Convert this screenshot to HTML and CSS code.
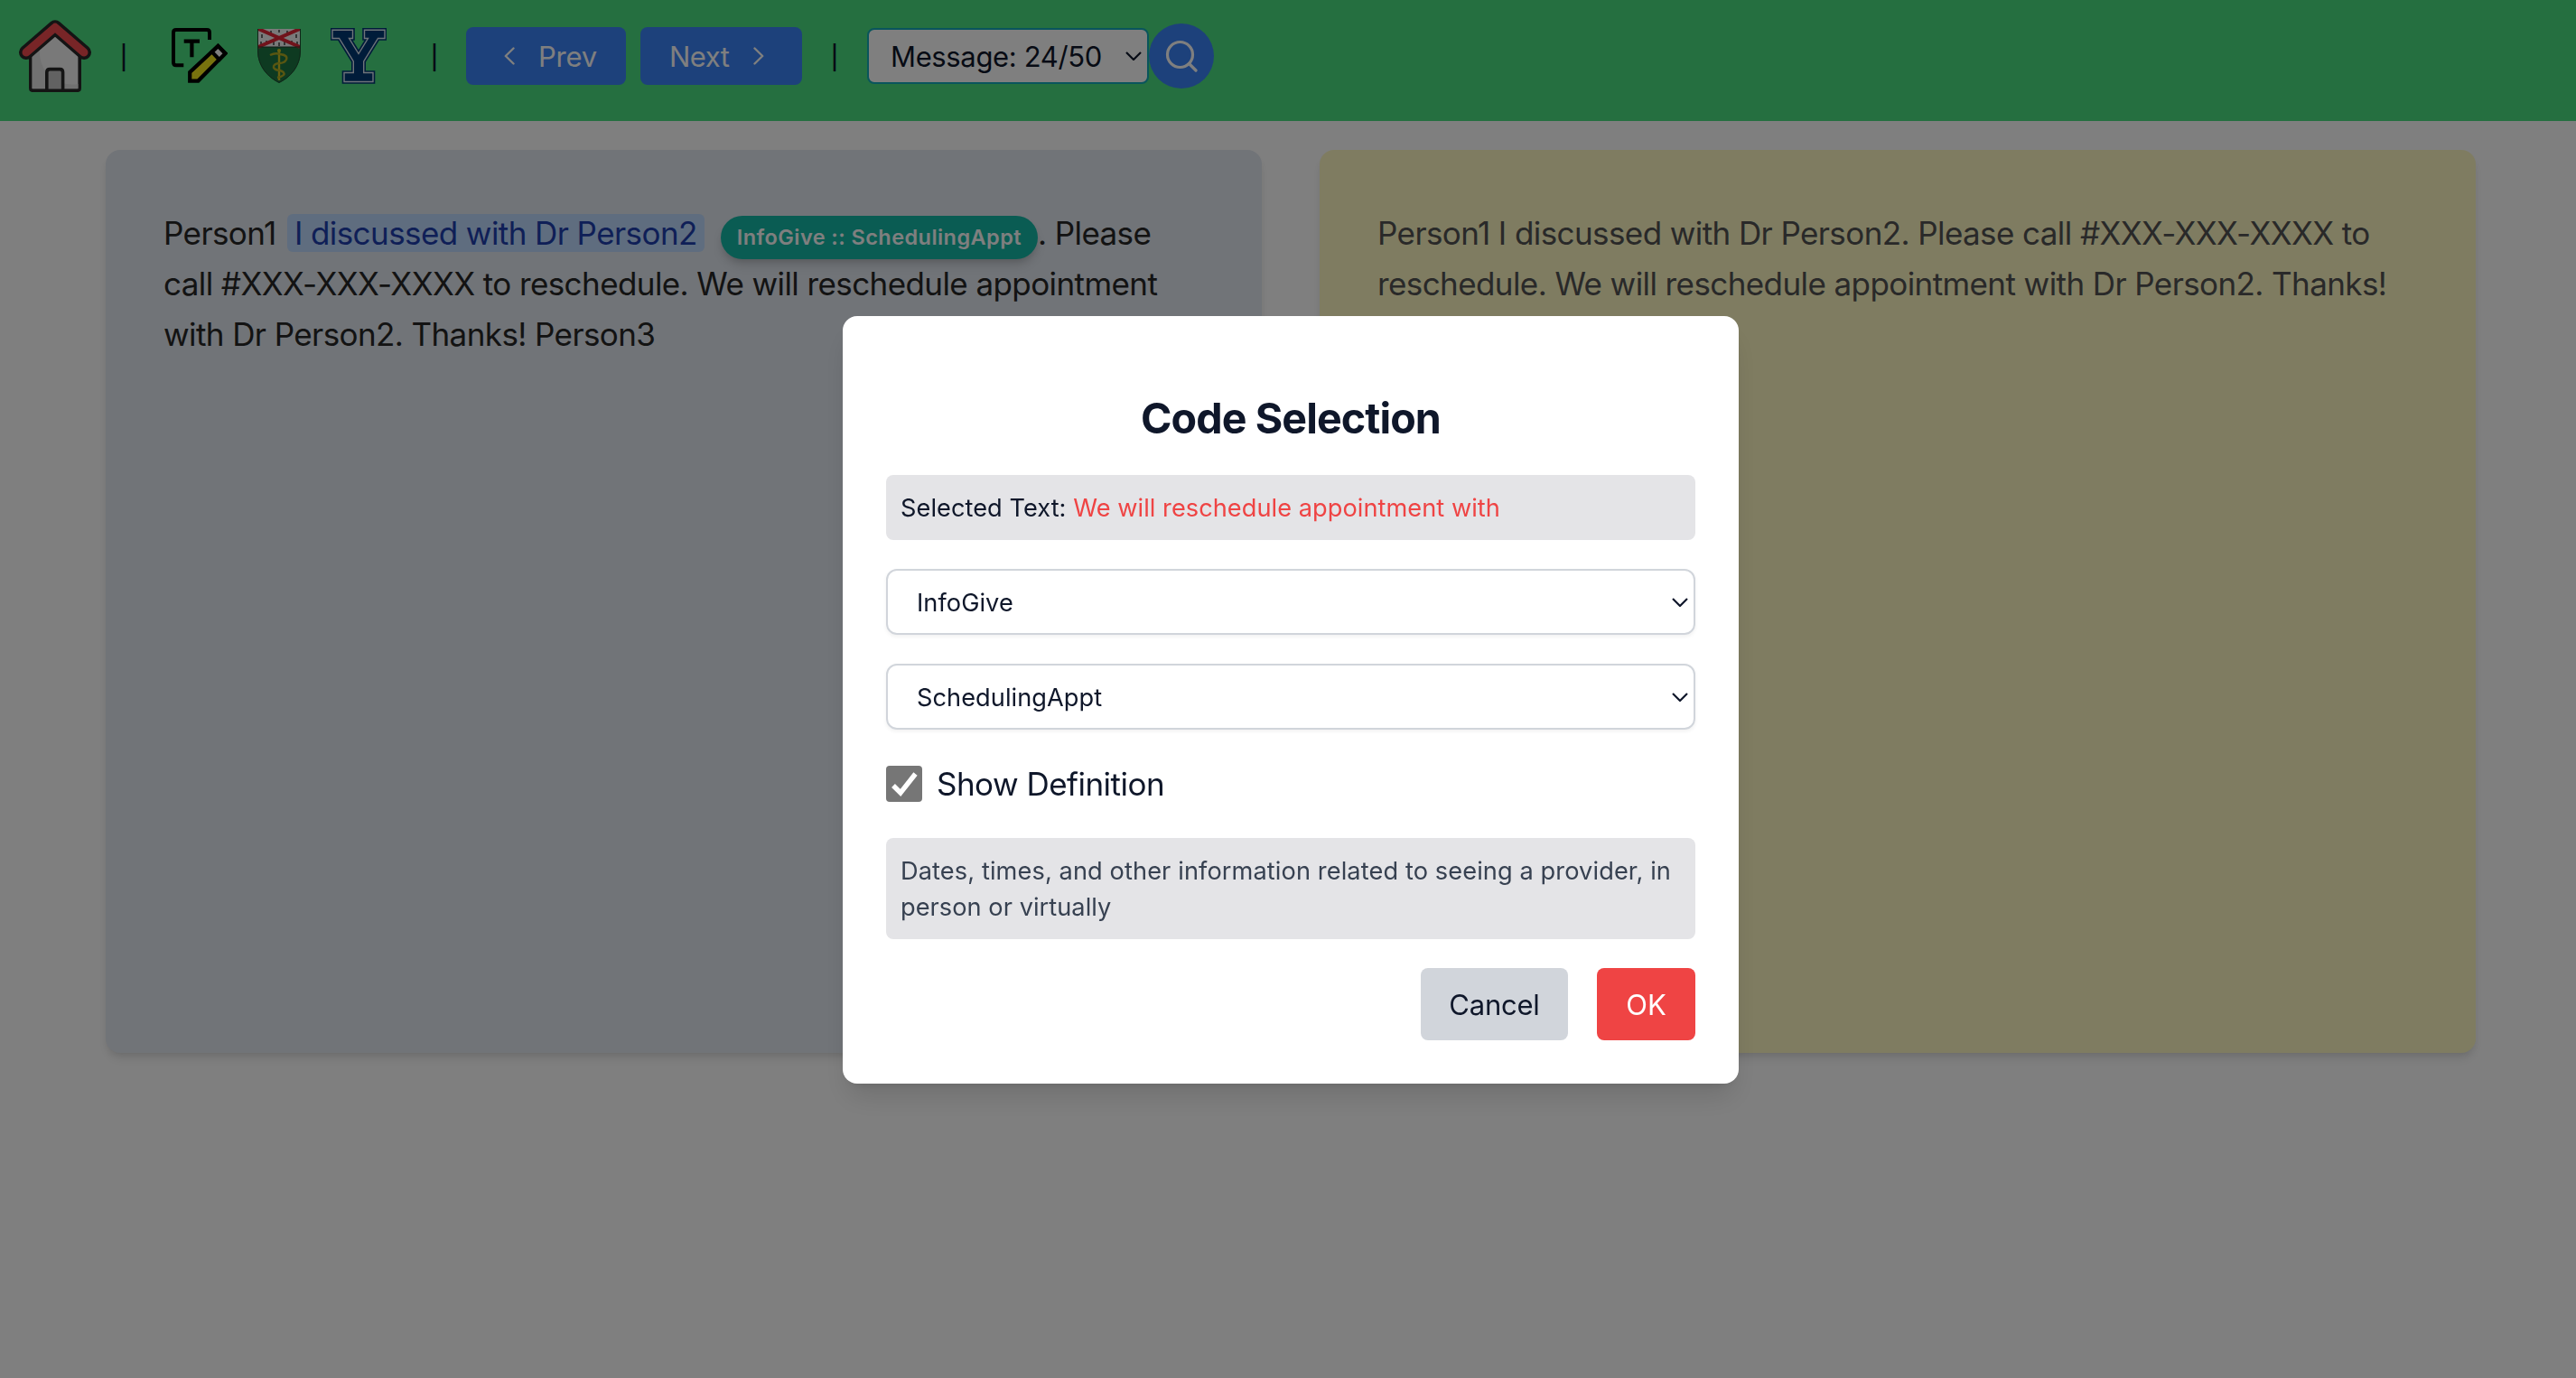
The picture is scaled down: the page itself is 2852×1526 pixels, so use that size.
FILE: index.html
```html
<!DOCTYPE html>
<html lang="en">
<head>
<meta charset="utf-8">
<title>Message Annotation</title>
<link rel="stylesheet" href="styles.css">
</head>
<body>
<header class="topbar">
  <svg class="home" viewBox="0 0 80 80">
    <path d="M12.8 34V75.4Q12.8 78.2 15.6 78.2H64.4Q67.2 78.2 67.2 75.4V34L40 12Z" fill="#f3f3f3" stroke="#282828" stroke-width="3.6"/>
    <path d="M14.6 36L23 30Q21 58 44 68Q54 73 65.4 71V76.4H14.6Z" fill="#e2e2e2"/>
    <path d="M30.8 78V58Q30.8 54.6 34.2 54.6H45.2Q48.6 54.6 48.6 58V78" fill="#c4c4c4" stroke="#282828" stroke-width="3.6"/>
    <path d="M14 78.2H66" stroke="#282828" stroke-width="3.6"/>
    <path d="M8 36L40 8.3L72 36" class="roof-edge"/>
    <path d="M8 36L40 8.3L72 36" class="roof-fill"/>
  </svg>
  <span class="bar bar-1">|</span>
  <svg class="edit" viewBox="0 0 62 62">
    <path d="M13.3 41.3H5Q2 41.3 2 38.3V5Q2 2 5 2H39Q42 2 42 5V13" fill="none" stroke="#000" stroke-width="4"/>
    <path d="M13.7 14.7H31M22.4 14V32.3" fill="none" stroke="#000" stroke-width="4.2"/>
    <path d="M20.2 49V58.6H29.4L59.4 28.2L51.4 20Z" fill="#f0e41c" stroke="#000" stroke-width="4.2"/>
    <path d="M44.8 26.6L51.4 20L59.4 28.2L52.8 34.9Z" fill="#fff" stroke="#000" stroke-width="4.2"/>
  </svg>
  <svg class="shield" viewBox="0 0 48 60">
    <path d="M0 0H48V24C48 42 36 54 24 60C12 54 0 42 0 24Z" fill="#1d7543"/>
    <path d="M0 0H48V20H0Z" fill="#f4f4f4"/>
    <path d="M15 2V6M33 2V6M5 6V10M43 6V10M10 13V17M38 13V17M24 1V4M24 15V19M4 14V18M44 14V18M18 14V18M30 14V18" stroke="#333" stroke-width="1.4"/>
    <path d="M1 0L47 20M47 0L1 20" stroke="#e32636" stroke-width="4"/>
    <path d="M0 20H48" stroke="#203b2a"/>
    <path d="M24 24V57" stroke="#d2c020" stroke-width="2.4"/>
    <path d="M14 29Q20 26 25 28Q34 29 32 34Q30 38 24 38Q17 39 18 43Q20 46 25 46Q31 48 29 51Q27 53 22 54" fill="none" stroke="#b3ad22" stroke-width="2.4"/>
    <circle cx="24" cy="24" r="2" fill="#d2c020"/>
    <path d="M.5 0V24C.5 42 12 53.6 24 59.5C36 53.6 47.5 42 47.5 24V0" fill="none" stroke="#204a30"/>
  </svg>
  <svg class="yale" viewBox="0 0 62 62">
    <path class="y-base" d="M2 2.3H24.5V11.5H20.5L31 28.5L41.5 11.5H37.5V2.3H60V11.5H52.5L36.7 37V49.5H47V59.5H15V49.5H25.3V37L9.5 11.5H2Z"/>
    <path class="y-line" d="M2 2.3H24.5V11.5H20.5L31 28.5L41.5 11.5H37.5V2.3H60V11.5H52.5L36.7 37V49.5H47V59.5H15V49.5H25.3V37L9.5 11.5H2Z"/>
  </svg>
  <span class="bar bar-2">|</span>
  <button class="nav prev"><svg class="chev" viewBox="0 0 12 20"><path d="M10.5 1.5L1.8 10L10.5 18.5"/></svg><span>Prev</span></button>
  <button class="nav next"><span>Next</span><svg class="chev" viewBox="0 0 12 20"><path d="M1.5 1.5L10.2 10L1.5 18.5"/></svg></button>
  <span class="bar bar-3">|</span>
  <div class="picker"><span>Message: 24/50</span><svg class="arrow" viewBox="0 0 18 10"><path d="M1 1L9 9L17 1"/></svg></div>
  <button class="search"><svg viewBox="0 0 36 36"><circle cx="16.5" cy="16.5" r="14"/><path d="M26.5 26.5L34 34"/></svg></button>
</header>

<main class="panels">
  <section class="panel source">Person1 <mark>I discussed with Dr Person2</mark><span class="badge">InfoGive :: SchedulingAppt</span>. Please<br>call #XXX-XXX-XXXX to reschedule. We will reschedule appointment<br>with Dr Person2. Thanks! Person3</section>
  <section class="panel result">Person1 I discussed with Dr Person2. Please call #XXX-XXX-XXXX to<br>reschedule. We will reschedule appointment with Dr Person2. Thanks!</section>
</main>

<div class="overlay">
  <div class="modal">
    <h2>Code Selection</h2>
    <div class="note selected">Selected Text: <span>We will reschedule appointment with</span></div>
    <div class="select"><span>InfoGive</span><svg class="arrow" viewBox="0 0 18 10"><path d="M1 1L9 9L17 1"/></svg></div>
    <div class="select"><span>SchedulingAppt</span><svg class="arrow" viewBox="0 0 18 10"><path d="M1 1L9 9L17 1"/></svg></div>
    <div class="check">
      <svg viewBox="0 0 40 40"><rect width="40" height="40" rx="4" fill="#767676"/><path d="M8 22L16 30L32.5 9" fill="none" stroke="#fff" stroke-width="5.4"/></svg>
      <span>Show Definition</span>
    </div>
    <div class="note definition">Dates, times, and other information related to seeing a provider, in<br><span>person or virtually</span></div>
    <div class="actions"><button class="cancel">Cancel</button><button class="ok">OK</button></div>
  </div>
</div>
</body>
</html>
```
FILE: styles.css
```css
* { box-sizing: border-box; }
html, body { height: 100%; overflow: hidden; }
body { margin: 0; background: #fff; font-family: Inter, "Liberation Sans", sans-serif; color: #0f172a; }
button { border: 0; padding: 0; font: inherit; }
svg { display: block; flex: none; }

/* Header */
.topbar { display: flex; align-items: center; height: 134px; padding: 0 0 10px 21px; background: #4ade80; font-size: 31px; }
.home { width: 80px; height: 80px; }
.roof-edge, .roof-fill { fill: none; stroke-linecap: round; stroke-linejoin: round; }
.roof-edge { stroke: #282828; stroke-width: 16; }
.roof-fill { stroke: #f04a4e; stroke-width: 9; }
.bar { width: 12px; text-align: center; font-size: 26px; font-weight: 500; line-height: 32px; padding-top: 4px; flex: none; display: flex; justify-content: center; }
.bar-1 { margin-left: 30px; }
.edit { width: 62px; height: 62px; margin-left: 47px; }
.shield { width: 48px; height: 60px; margin-left: 33px; }
.yale { width: 62px; height: 62px; margin-left: 33px; }
.y-base { fill: #003874; stroke: #003874; stroke-width: 4.6; }
.y-line { fill: #003874; stroke: #dfe8f2; stroke-width: 1.4; }
.bar-2 { margin-left: 47px; }
.nav { display: flex; align-items: center; height: 64px; border-radius: 8px; background: #3b82f6; color: #fff; flex: none; }
.chev { width: 12px; height: 20px; fill: none; stroke: #fff; stroke-width: 2.4; stroke-linecap: round; stroke-linejoin: round; }
.prev { width: 177px; margin-left: 29px; padding-left: 42px; gap: 26px; letter-spacing: -.24px; }
.next { width: 179px; margin-left: 16px; padding-left: 32px; gap: 27px; letter-spacing: -.5px; }
.bar-3 { margin-left: 30px; }
.picker { display: flex; align-items: center; justify-content: space-between; width: 312px; height: 62px; margin-left: 30px; padding: 0 6px 0 24px; border: 2px solid #12aab8; border-radius: 8px; background: #fff; letter-spacing: -.36px; flex: none; }
.arrow { width: 18px; height: 10px; fill: none; stroke: #0f172a; stroke-width: 2.2; }
.search { display: grid; place-items: center; width: 72px; height: 72px; border-radius: 50%; background: #3b82f6; flex: none; }
.search svg { width: 36px; height: 36px; fill: none; stroke: #fff; stroke-width: 3.2; stroke-linecap: round; }

/* Message panels */
.panels { display: grid; grid-template-columns: 1280px 1280px; gap: 64px; margin: 32px 0 0 117px; }
.panel { height: 1000px; padding: 64px; border-radius: 16px; font-size: 35px; line-height: 56px; letter-spacing: -.59px; white-space: nowrap; box-shadow: 0 8px 12px -2px rgba(0,0,0,.1), 0 4px 8px -4px rgba(0,0,0,.1); }
.source { background: #e2e8f0; color: #262626; }
.result { background: #fef9c3; color: #525252; }
mark { margin-left: 3px; padding: 0 8px; border-radius: 6px; background: #bfdbfe; color: #1e3fae; letter-spacing: -.58px; }
.badge { display: inline-block; margin: -4px 0 -4px 18px; padding: 8px 18px; border-radius: 24px; background: #14b8a6; color: #fff; font-size: 23.5px; font-weight: 600; line-height: 32px; letter-spacing: .43px; box-shadow: 0 8px 12px -2px rgba(0,0,0,.15), 0 4px 8px -4px rgba(0,0,0,.15); }

/* Dialog */
.overlay { position: fixed; inset: 0; display: flex; justify-content: center; align-items: flex-start; padding: 350px 0 0 6px; background: rgba(0,0,0,.5); }
.modal { width: 992px; height: 850px; padding: 81px 48px 48px; border-radius: 16px; background: #fff; box-shadow: 0 20px 30px -6px rgba(0,0,0,.12), 0 8px 12px -8px rgba(0,0,0,.12); }
h2 { margin: 0 0 31px; text-align: center; font-size: 46.6px; font-weight: 700; line-height: 64px; letter-spacing: -.9px; }
.note { padding: 17px 16px 15px; border-radius: 8px; background: #e4e4e7; font-size: 27.2px; line-height: 40px; white-space: nowrap; }
.selected { letter-spacing: .05px; }
.selected span { color: #ef4444; letter-spacing: .04px; }
.select { display: flex; align-items: center; justify-content: space-between; height: 73px; margin-top: 32px; padding: 0 6px 0 32px; border: 2px solid #d1d5db; border-radius: 12px; font-size: 27.2px; letter-spacing: .05px; box-shadow: 0 2px 4px rgba(0,0,0,.06); }
.select span { padding-top: 2px; }
.check { display: flex; align-items: center; gap: 16px; height: 40px; margin: 40px 0; font-size: 35px; letter-spacing: -.52px; }
.check svg { width: 40px; height: 40px; }
.definition { color: #374151; letter-spacing: .1px; }
.definition span { letter-spacing: .04px; }
.actions { display: flex; justify-content: flex-end; gap: 32px; margin-top: 32px; font-size: 31px; }
.actions button { height: 80px; border-radius: 8px; }
.cancel { width: 163px; background: #d1d5db; color: #0f172a; letter-spacing: -.23px; }
.ok { width: 109px; background: #ef4444; color: #fff; }
```
